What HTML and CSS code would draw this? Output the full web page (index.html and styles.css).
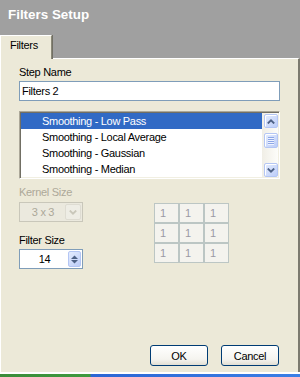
FILE: index.html
```html
<!DOCTYPE html>
<html lang="en">
<head>
    <meta charset="UTF-8">
    <title>Filters Setup</title>
    <link rel="stylesheet" href="styles.css">
</head>
<body>
    <div class="window">
        <div class="titlebar">
            <h1 class="title">Filters Setup</h1>
        </div>
        <div class="tabs">
            <div class="tab">Filters</div>
        </div>
        <div class="panel">
            <div class="label">Step Name</div>
            <div class="textbox">Filters 2</div>

            <div class="listbox">
                <ul class="items">
                    <li class="item selected">Smoothing - Low Pass</li>
                    <li class="item">Smoothing - Local Average</li>
                    <li class="item">Smoothing - Gaussian</li>
                    <li class="item">Smoothing - Median</li>
                </ul>
                <div class="scrollbar">
                    <span class="sb-btn">
                        <svg width="8" height="5" viewBox="0 0 8 5"><polyline points="0.8,4.5 4,1.3 7.2,4.5" fill="none" stroke="#4d6185" stroke-width="1.8"/></svg>
                    </span>
                    <span class="sb-thumb">
                        <span class="grip"></span>
                        <span class="grip"></span>
                        <span class="grip"></span>
                        <span class="grip"></span>
                    </span>
                    <span class="sb-btn down">
                        <svg width="8" height="5" viewBox="0 0 8 5"><polyline points="0.8,0.5 4,3.7 7.2,0.5" fill="none" stroke="#4d6185" stroke-width="1.8"/></svg>
                    </span>
                </div>
            </div>

            <div class="options">
                <div class="settings">
                    <div class="label disabled">Kernel Size</div>
                    <div class="combo">
                        <span class="combo-value">3 x 3</span>
                        <span class="combo-btn">
                            <svg width="8" height="5" viewBox="0 0 8 5"><polyline points="0.8,0.5 4,3.7 7.2,0.5" fill="none" stroke="#c9c7ba" stroke-width="1.8"/></svg>
                        </span>
                    </div>
                    <div class="label gap">Filter Size</div>
                    <div class="spin">
                        <span class="spin-value">14</span>
                        <span class="spin-btn">
                            <svg width="7" height="4" viewBox="0 0 7 4"><polygon points="0,4 3.5,0.5 7,4" fill="#4d6185"/></svg>
                            <svg width="7" height="4" viewBox="0 0 7 4"><polygon points="0,0 3.5,3.5 7,0" fill="#4d6185"/></svg>
                        </span>
                    </div>
                </div>
                <div class="kernel">
                    <span class="cell">1</span>
                    <span class="cell">1</span>
                    <span class="cell">1</span>
                    <span class="cell">1</span>
                    <span class="cell">1</span>
                    <span class="cell">1</span>
                    <span class="cell">1</span>
                    <span class="cell">1</span>
                    <span class="cell">1</span>
                </div>
            </div>

            <div class="actions">
                <button class="btn">OK</button>
                <button class="btn">Cancel</button>
            </div>
        </div>
        <div class="frame-bottom"></div>
        <div class="taskbar"></div>
    </div>
</body>
</html>
```

FILE: styles.css
```css
* {
    box-sizing: border-box;
}

body {
    margin: 0;
    width: 300px;
    height: 377px;
    overflow: hidden;
    font-family: 'Liberation Sans', Arial, sans-serif;
    font-size: 11px;
    letter-spacing: -0.3px;
    color: #000;
    background: #a0a0a0;
}

.window {
    display: flex;
    flex-direction: column;
    height: 377px;
}

.titlebar {
    height: 35px;
    padding: 7px 0 0 8px;
    background: #a0a0a0;
}

.title {
    margin: 0;
    font-size: 13.4px;
    font-weight: bold;
    line-height: 15px;
    letter-spacing: 0;
    color: #fff;
}

.tabs {
    display: flex;
    height: 23px;
}

.tab {
    position: relative;
    z-index: 1;
    width: 52px;
    height: 24px;
    margin-bottom: -1px;
    padding: 3px 0 0 9px;
    line-height: 13px;
    background: #ece9d8;
    border-top: 1px solid #fff;
    border-left: 1px solid #fff;
    border-right: 1px solid #8a8878;
    box-shadow: 1px 0 0 #716f64;
}

.panel {
    flex: 1;
    display: flex;
    flex-direction: column;
    padding: 7px 18px 6px 18px;
    background: #ece9d8;
    border-top: 1px solid #fff;
    border-left: 1px solid #fff;
    border-right: 2px solid #7c7a6f;
}

.label {
    line-height: 13px;
}

.label.disabled {
    color: #aca899;
}

.label.gap {
    margin-top: 12px;
}

.textbox {
    margin-top: 2px;
    height: 20px;
    padding-left: 2px;
    line-height: 18px;
    background: #fff;
    border: 1px solid #7f9db9;
}

/* list with scrollbar */
.listbox {
    display: flex;
    height: 68px;
    margin-top: 10px;
    padding: 1px;
    background: #fff;
    border: 1px solid;
    border-color: #aca899 #fff #fff #aca899;
    box-shadow: inset 1px 1px 0 #716f64, inset -1px -1px 0 #f1efe2;
}

.items {
    flex: 1;
    margin: 0;
    padding: 0;
    list-style: none;
}

.item {
    height: 16px;
    padding-left: 21px;
    line-height: 16px;
    white-space: nowrap;
}

.item.selected {
    background: #316ac5;
    color: #fff;
}

.scrollbar {
    width: 16px;
    display: flex;
    flex-direction: column;
    padding: 1px 0 0 2px;
    background: linear-gradient(to right, #f0eee6, #fdfdfa);
}

.sb-btn,
.sb-thumb {
    display: flex;
    flex-direction: column;
    align-items: center;
    justify-content: center;
    width: 14px;
    height: 14px;
    border: 1px solid #b4c6f4;
    border-radius: 2px;
    background: linear-gradient(135deg, #e4ecfe, #bccdf8);
    box-shadow: inset 1px 1px 0 #fff;
}

.sb-thumb {
    height: 15px;
    margin-top: 5px;
    gap: 1px;
}

.sb-btn.down {
    margin-top: auto;
}

.grip {
    width: 6px;
    height: 1px;
    background: #8da6e6;
    box-shadow: 0 1px 0 #eef3ff;
}

/* lower controls */
.options {
    display: flex;
    margin-top: 7px;
}

.settings {
    display: flex;
    flex-direction: column;
    width: 64px;
}

.combo {
    display: flex;
    height: 20px;
    margin-top: 3px;
    padding: 1px;
    background: #ebe9de;
    border: 1px solid #c9c7ba;
    color: #aca899;
}

.combo-value {
    flex: 1;
    text-align: center;
    line-height: 16px;
}

.combo-btn {
    display: flex;
    align-items: center;
    justify-content: center;
    width: 16px;
    background: #eeede5;
    border: 1px solid #dedcd2;
    border-radius: 2px;
}

.spin {
    display: flex;
    height: 20px;
    margin-top: 2px;
    padding: 1px;
    background: #fff;
    border: 1px solid #7f9db9;
}

.spin-value {
    flex: 1;
    text-align: center;
    line-height: 16px;
}

.spin-btn {
    display: flex;
    flex-direction: column;
    align-items: center;
    justify-content: space-around;
    width: 13px;
    padding: 2px 0;
    border: 1px solid #b4c6f4;
    border-radius: 2px;
    background: linear-gradient(135deg, #e4ecfe, #bccdf8);
}

.kernel {
    display: grid;
    grid-template-columns: repeat(3, 25px);
    grid-auto-rows: 20px;
    align-self: flex-start;
    margin: 17px 0 0 71px;
}

.cell {
    padding-left: 5px;
    line-height: 18px;
    color: #9a9aa4;
    background: #f4f3ee;
    border: 1px solid #bcc6c4;
}

.actions {
    display: flex;
    justify-content: flex-end;
    gap: 13px;
    margin-top: auto;
    padding-right: 1px;
}

.btn {
    width: 58px;
    height: 21px;
    padding: 0;
    font: inherit;
    letter-spacing: inherit;
    color: #000;
    border: 1px solid #003c74;
    border-radius: 3px;
    background: linear-gradient(#fff, #f5f4ef 70%, #e2dfd4);
}

.frame-bottom {
    height: 2px;
    background: #fff;
}

.taskbar {
    height: 3px;
    background: linear-gradient(to right, #3a8c3a 0, #3f9a3f 90px, #2b66d4 91px, #3a7fe6);
}
```
